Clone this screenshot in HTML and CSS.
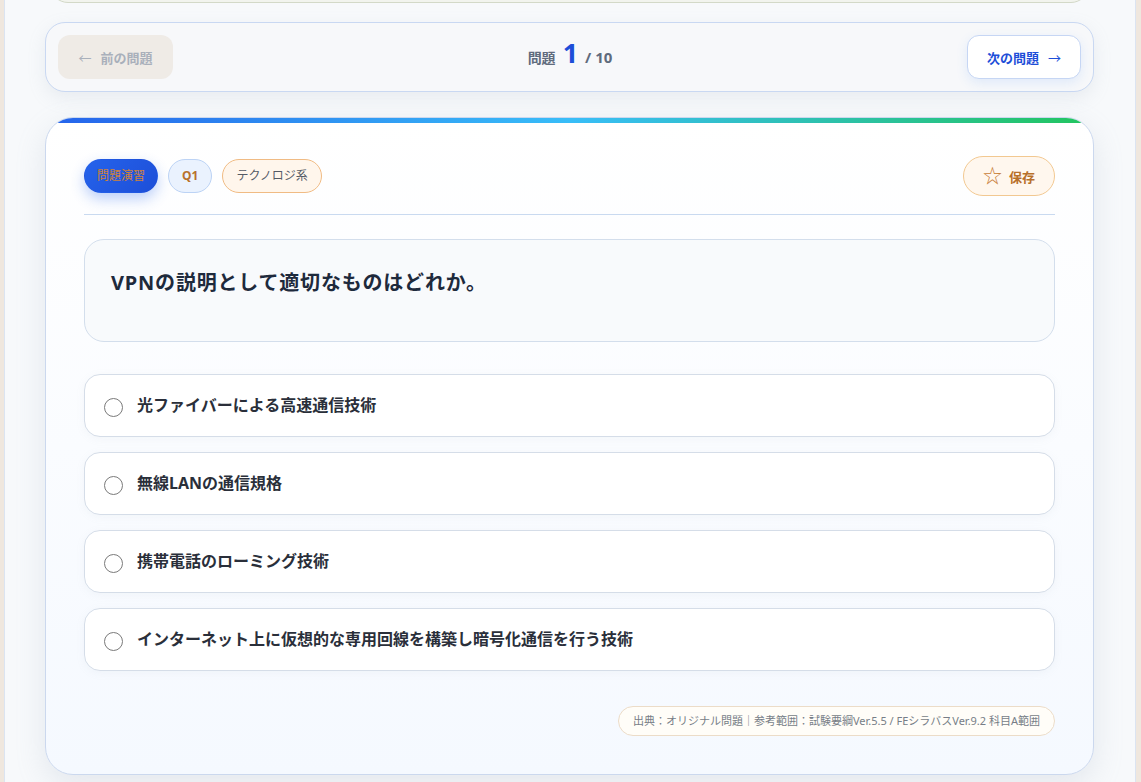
FILE: index.html
```html
<!DOCTYPE html>
<html lang="ja">

<head>
    <meta charset="UTF-8">
    <meta name="viewport" content="width=device-width, initial-scale=1.0">
    <title>問題演習</title>
    <link rel="stylesheet" href="styles.css">
</head>

<body>
    <div class="page">
        <div class="prev-card"></div>

        <div class="nav">
            <div class="btn btn-prev"><span class="arrow">←</span>前の問題</div>
            <div class="counter">
                <span class="counter-label">問題</span>
                <span class="counter-num">1</span>
                <span class="counter-total">/ 10</span>
            </div>
            <div class="btn btn-next">次の問題<span class="arrow">→</span></div>
        </div>

        <div class="card">
            <div class="card-bar"></div>
            <div class="card-body">
                <div class="card-head">
                    <div class="tags">
                        <span class="tag tag-mode">問題演習</span>
                        <span class="tag tag-no">Q1</span>
                        <span class="tag tag-cat">テクノロジ系</span>
                    </div>
                    <div class="save"><span class="star">☆</span>保存</div>
                </div>

                <div class="question">VPNの説明として適切なものはどれか。</div>

                <ul class="options">
                    <li class="option"><span class="radio"></span>光ファイバーによる高速通信技術</li>
                    <li class="option"><span class="radio"></span>無線LANの通信規格</li>
                    <li class="option"><span class="radio"></span>携帯電話のローミング技術</li>
                    <li class="option"><span class="radio"></span>インターネット上に仮想的な専用回線を構築し暗号化通信を行う技術</li>
                </ul>

                <div class="source-row">
                    <span class="source">出典：オリジナル問題｜参考範囲：試験要綱Ver.5.5 / FEシラバスVer.9.2 科目A範囲</span>
                </div>
            </div>
        </div>
    </div>
</body>

</html>
```

FILE: styles.css
```css
* {
    margin: 0;
    padding: 0;
    box-sizing: border-box;
    list-style: none;
}

body {
    background-color: #efe7de;
    font-family: "Noto Sans", "Noto Sans CJK JP", sans-serif;
    color: #1f2937;
}

.page {
    display: flow-root;
    margin: 0 5px 0 4px;
    min-height: 820px;
    background-color: #f7f9fb;
    border-left: 1px solid #dbe4f1;
    border-right: 1px solid #dbe4f1;
    padding: 0 41px 0 40px;
}

.prev-card {
    height: 20px;
    margin: -17px 5px 0 5px;
    background-color: #f2f4ee;
    border: 1px solid #d3d9c8;
    border-radius: 0 0 18px 18px;
}

/* nav */
.nav {
    margin-top: 19px;
    height: 70px;
    display: flex;
    align-items: center;
    justify-content: space-between;
    padding: 0 12px;
    background-color: #f7f8fa;
    border: 1px solid #c9d8f2;
    border-radius: 20px;
    box-shadow: 0 6px 18px rgba(148, 163, 184, 0.15);
}

.btn {
    height: 44px;
    display: flex;
    align-items: center;
    justify-content: center;
    gap: 9px;
    border-radius: 12px;
    font-size: 13px;
    font-weight: 700;
}

.arrow {
    font-weight: 400;
}

.btn-prev {
    width: 115px;
    background-color: #efebe6;
    color: #a9b0bb;
}

.btn-next {
    width: 114px;
    background-color: #fff;
    color: #1d4ed8;
    border: 1px solid #c6d6f4;
    box-shadow: 0 4px 12px rgba(59, 130, 246, 0.12);
}

.counter {
    display: flex;
    align-items: baseline;
    gap: 7px;
    font-weight: 700;
    color: #5f6b7d;
    line-height: 1;
    padding-bottom: 9px;
}

.counter-label {
    font-size: 14px;
}

.counter-num {
    font-size: 27px;
    color: #1d4ed8;
}

.counter-total {
    font-size: 15px;
}

/* card */
.card {
    margin-top: 25px;
    border: 1px solid #cbd8ee;
    border-radius: 28px;
    overflow: hidden;
    background: linear-gradient(180deg, #ffffff 0%, #f5f9ff 100%);
    box-shadow: 0 10px 30px rgba(148, 163, 184, 0.2);
}

.card-bar {
    height: 5px;
    background: linear-gradient(90deg, #2563eb 0%, #38bdf8 50%, #22c55e 100%);
}

.card-body {
    padding: 33px 38px 38px 38px;
}

.card-head {
    display: flex;
    justify-content: space-between;
    align-items: center;
    padding-bottom: 18px;
    border-bottom: 1px solid #c9daf0;
}

.tags {
    display: flex;
    gap: 10px;
}

.tag {
    height: 34px;
    line-height: 32px;
    padding: 0 13px;
    border-radius: 17px;
    font-size: 12px;
    border: 1px solid transparent;
}

.tag-mode {
    padding: 0 12px;
    background: linear-gradient(135deg, #2563eb, #1d4ed8);
    color: #d08236;
    box-shadow: 0 6px 14px rgba(37, 99, 235, 0.3);
}

.tag-no {
    background-color: #eaf2fe;
    border-color: #bcd3f5;
    color: #b8712c;
    font-weight: 700;
}

.tag-cat {
    background-color: #fff6ec;
    border-color: #f0bb84;
    color: #555b66;
}

.save {
    width: 92px;
    height: 40px;
    display: flex;
    align-items: center;
    justify-content: center;
    gap: 7px;
    background-color: #fff7ee;
    border: 1px solid #f2c891;
    border-radius: 20px;
    color: #b8702a;
    font-size: 13px;
    font-weight: 700;
}

.star {
    font-size: 19px;
    font-weight: 400;
    color: #c9803a;
    line-height: 1;
}

.question {
    margin-top: 24px;
    min-height: 103px;
    padding: 29px 26px;
    background-color: #f8fafc;
    border: 1px solid #d3deec;
    border-radius: 20px;
    font-size: 20px;
    font-weight: 700;
    line-height: 28px;
    letter-spacing: 0.04em;
    color: #1e2a3c;
}

.options {
    margin-top: 32px;
    display: flex;
    flex-direction: column;
    gap: 15px;
}

.option {
    height: 63px;
    display: flex;
    align-items: center;
    padding: 0 19px 3px 19px;
    background-color: #fff;
    border: 1px solid #d5dde8;
    border-radius: 16px;
    font-size: 16px;
    font-weight: 700;
    color: #2a2f3a;
    box-shadow: 0 2px 8px rgba(148, 163, 184, 0.08);
}

.radio {
    width: 19px;
    height: 19px;
    margin-top: 7px;
    margin-right: 14px;
    border: 1.5px solid #7a7a7a;
    border-radius: 50%;
    background-color: #fff;
    flex-shrink: 0;
}

.source-row {
    margin-top: 35px;
    display: flex;
    justify-content: flex-end;
}

.source {
    height: 30px;
    line-height: 28px;
    padding: 0 14px;
    background-color: #fffdf8;
    border: 1px solid #ecdcc8;
    border-radius: 15px;
    font-size: 11px;
    color: #777d87;
}
```
